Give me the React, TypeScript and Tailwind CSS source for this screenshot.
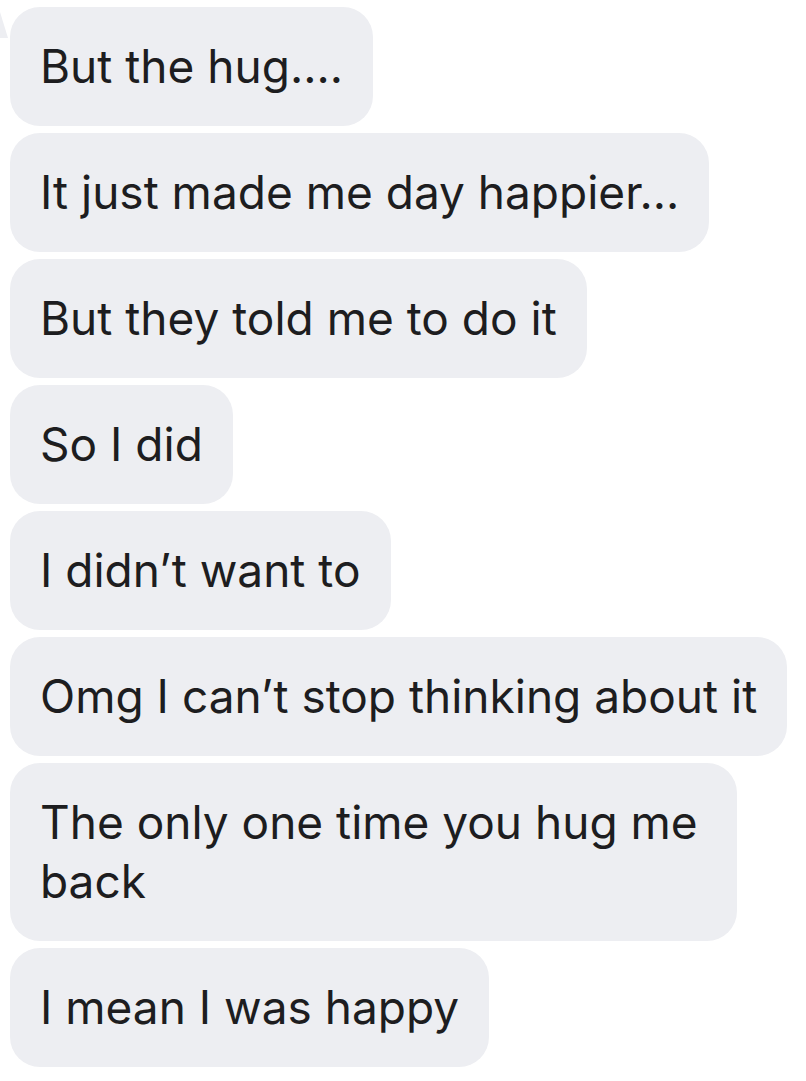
const messages = [
  { id: 1, text: "But the hug...." },
  { id: 2, text: "It just made me day happier..." },
  { id: 3, text: "But they told me to do it" },
  { id: 4, text: "So I did" },
  { id: 5, text: "I didn’t want to" },
  { id: 6, text: "Omg I can’t stop thinking about it" },
  { id: 7, text: "The only one time you hug me back", wide: "max-w-[727px]" },
  { id: 8, text: "I mean I was happy" },
];

const Bubble = ({ text, wide }: { text: string; wide?: string }) => {
  return (
    <div
      className={`${wide ? wide : "max-w-[790px]"} rounded-[30px] bg-[#edeef2] px-[30px] py-[30px] text-[46px] leading-[59px] text-[#1d1d20]`}
    >
      {text}
    </div>
  );
};

export default function App() {
  return (
    <div
      className="relative flex h-[1081px] w-[806px] flex-col items-start gap-[7px] overflow-hidden bg-white pl-[10px] pt-[7px]"
      style={{ fontFamily: "Inter, 'Noto Sans', sans-serif" }}
    >
      {/* tail of the previous bubble, cut off at the top edge */}
      <div className="absolute left-0 top-[12px] h-[26px] w-[8px] bg-[#edeef2] [clip-path:polygon(0_0,100%_100%,0_100%)]" />
      {messages.map((m) => (
        <Bubble key={m.id} text={m.text} wide={m.wide} />
      ))}
    </div>
  );
}
